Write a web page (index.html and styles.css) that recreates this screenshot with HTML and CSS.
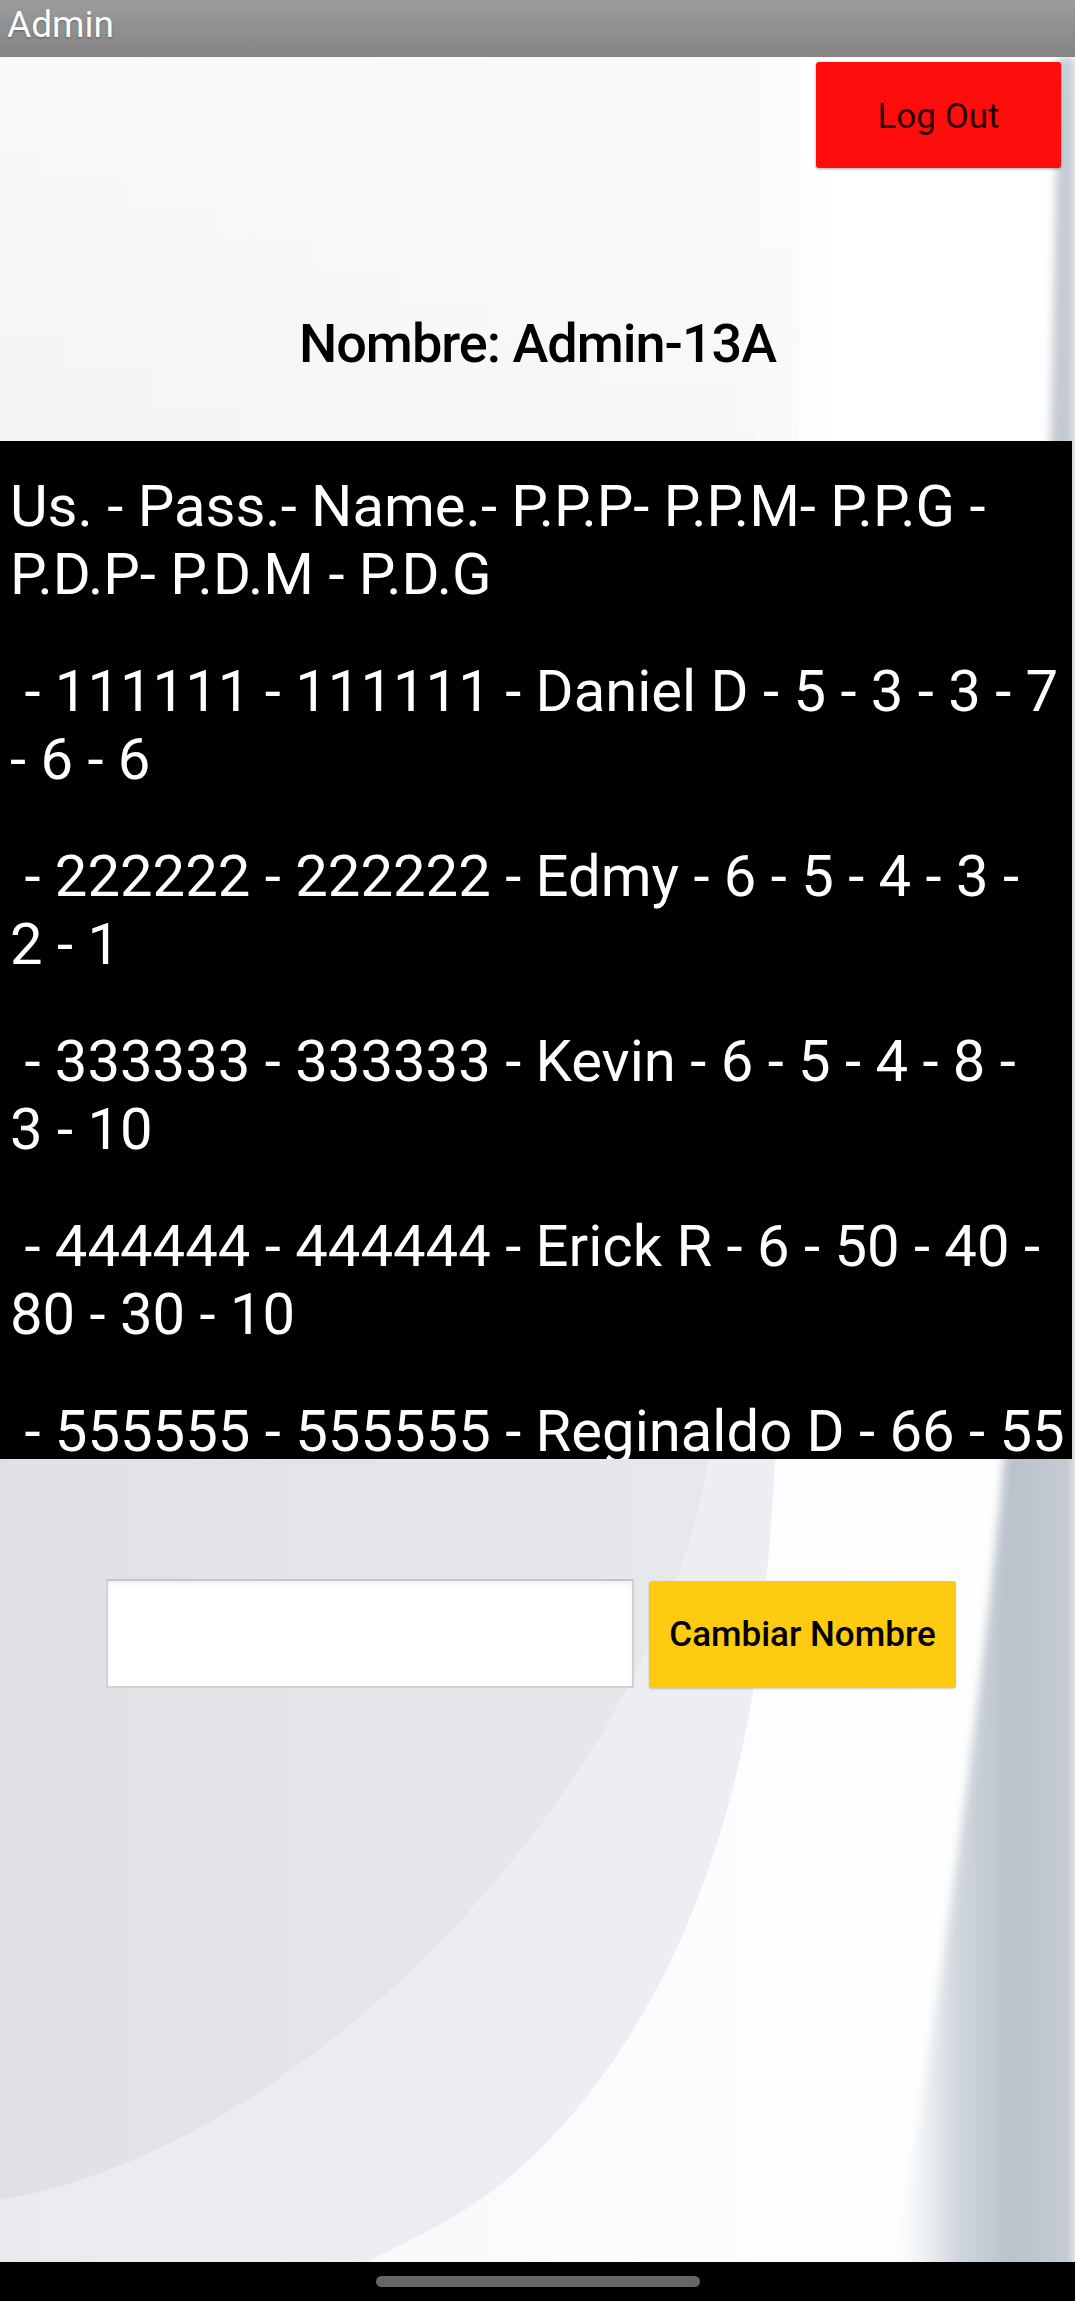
FILE: index.html
```html
<!DOCTYPE html>
<html lang="es">
<head>
<meta charset="utf-8">
<title>Admin</title>
<link rel="stylesheet" href="styles.css">
</head>
<body>
<div class="app">
  <svg class="wallpaper" viewBox="0 0 1075 2301" preserveAspectRatio="none" aria-hidden="true">
    <defs>
      <linearGradient id="wpBase" x1="0" y1="0" x2="1" y2="0">
        <stop offset="0" stop-color="#dfe1e4"/>
        <stop offset="0.5" stop-color="#e5e7ea"/>
        <stop offset="1" stop-color="#e9ebee"/>
      </linearGradient>
      <linearGradient id="wpMid" x1="0" y1="0" x2="1" y2="0">
        <stop offset="0" stop-color="#e9ebee"/>
        <stop offset="1" stop-color="#eef0f3"/>
      </linearGradient>
      <linearGradient id="wpBand" x1="0" y1="0" x2="1" y2="0">
        <stop offset="0" stop-color="#f7f8fa"/>
        <stop offset="0.6" stop-color="#fcfdfe"/>
        <stop offset="1" stop-color="#ffffff"/>
      </linearGradient>
      <linearGradient id="wpTop" x1="0" y1="0" x2="0" y2="1">
        <stop offset="0" stop-color="#ffffff" stop-opacity="0.8"/>
        <stop offset="0.4" stop-color="#ffffff" stop-opacity="0.65"/>
        <stop offset="1" stop-color="#ffffff" stop-opacity="0"/>
      </linearGradient>
      <linearGradient id="wpEdge" x1="0" y1="0" x2="1" y2="0">
        <stop offset="0" stop-color="#eef1f4" stop-opacity="0"/>
        <stop offset="0.35" stop-color="#d2d8de"/>
        <stop offset="0.65" stop-color="#b9c2cc"/>
        <stop offset="1" stop-color="#c6ccd3"/>
      </linearGradient>
      <filter id="soft"><feGaussianBlur stdDeviation="5"/></filter>
    </defs>
    <rect width="1075" height="2301" fill="url(#wpBase)"/>
    <path d="M760 57 C 755 700, 745 1250, 705 1480 C 640 1800, 300 2150, 0 2200 L0 2301 L1075 2301 L1075 57 Z" fill="url(#wpMid)"/>
    <path d="M800 57 C 800 800, 790 1400, 760 1640 C 730 1900, 620 2100, 480 2200 C 420 2240, 360 2262, 290 2301 L1075 2301 L1075 57 Z" fill="url(#wpBand)"/>
    <rect x="0" y="0" width="1075" height="1150" fill="url(#wpTop)"/>
    <path d="M1058 57 C 1050 600, 1030 1200, 1000 1500 C 970 1800, 930 2050, 890 2301 L1075 2301 L1075 57 Z" fill="url(#wpEdge)" filter="url(#soft)"/>
  </svg>

  <header class="appbar">
    <span class="appbar-title">Admin</span>
  </header>

  <main class="content">
    <div class="top-row">
      <button class="logout" type="button">Log Out</button>
    </div>

    <h1 class="name">Nombre: Admin-13A</h1>

    <section class="list">
      <p>Us. - Pass.- Name.- P.P.P- P.P.M- P.P.G -<br>P.D.P- P.D.M - P.D.G</p>
      <p> - 111111 - 111111 - Daniel D - 5 - 3 - 3 - 7<br>- 6 - 6</p>
      <p> - 222222 - 222222 - Edmy - 6 - 5 - 4 - 3 -<br>2 - 1</p>
      <p> - 333333 - 333333 - Kevin - 6 - 5 - 4 - 8 -<br>3 - 10</p>
      <p> - 444444 - 444444 - Erick R - 6 - 50 - 40 -<br>80 - 30 - 10</p>
      <p> - 555555 - 555555 - Reginaldo D - 66 - 55</p>
    </section>

    <div class="form-row">
      <input class="name-input" type="text" aria-label="Nuevo nombre">
      <button class="change" type="button">Cambiar Nombre</button>
    </div>
  </main>

  <footer class="navbar">
    <span class="pill"></span>
  </footer>
</div>
</body>
</html>
```

FILE: styles.css
```css
html, body {
  margin: 0;
  padding: 0;
}

body {
  width: 1075px;
  height: 2301px;
  overflow: hidden;
  background: #e6e8eb;
  font-family: Roboto, "Noto Sans", "Liberation Sans", sans-serif;
}

.app {
  position: relative;
  width: 1075px;
  height: 2301px;
  display: flex;
  flex-direction: column;
}

.wallpaper {
  position: absolute;
  top: 0;
  left: 0;
  width: 1075px;
  height: 2301px;
  z-index: 0;
}

.appbar,
.content,
.navbar {
  position: relative;
  z-index: 1;
}

.appbar {
  height: 57px;
  flex: none;
  display: flex;
  align-items: flex-start;
  padding-left: 7px;
  box-sizing: border-box;
  background: linear-gradient(#9c9c9c, #848484);
}

.appbar-title {
  color: #ffffff;
  font-size: 37px;
  line-height: 49px;
  text-shadow: 0 1px 2px rgba(0, 0, 0, 0.35);
}

.content {
  flex: 1;
  display: flex;
  flex-direction: column;
}

.top-row {
  display: flex;
  justify-content: flex-end;
  padding: 5px 14px 0 0;
}

.logout {
  width: 245px;
  height: 106px;
  margin: 0;
  padding: 3px 0 0;
  border: 0;
  border-radius: 3px;
  background: #ff0c0c;
  box-shadow: 0 1px 3px rgba(0, 0, 0, 0.35);
  color: rgba(0, 0, 0, 0.85);
  font-family: Roboto, "Noto Sans", sans-serif;
  font-weight: 400;
  font-size: 35px;
  line-height: 1;
}

.name {
  margin: 144px 0 0;
  text-align: center;
  font-family: Roboto, "Noto Sans", sans-serif;
  font-weight: 500;
  font-size: 54px;
  line-height: 64px;
  letter-spacing: -1px;
  color: #000000;
}

.list {
  margin: 65px 3px 0 0;
  height: 1018px;
  box-sizing: border-box;
  padding: 32px 0 0 10px;
  overflow: hidden;
  background: #000000;
  color: #ffffff;
  font-family: Roboto, "Noto Sans", sans-serif;
  font-weight: 400;
  font-size: 58px;
  line-height: 67.5px;
}

.list p {
  margin: 0 0 50px;
  white-space: pre;
}

.form-row {
  display: flex;
  justify-content: center;
  align-items: flex-start;
  gap: 15px;
  margin-top: 120px;
  padding-right: 13px;
}

.name-input {
  width: 528px;
  height: 109px;
  box-sizing: border-box;
  margin: 0;
  padding: 0 12px;
  border: 2px solid #cfd2d5;
  border-top-color: #c3c6c9;
  border-radius: 0;
  background: #ffffff;
  box-shadow: inset 0 4px 6px rgba(0, 0, 0, 0.05);
  font-family: Roboto, sans-serif;
  font-size: 35px;
}

.change {
  width: 307px;
  height: 107px;
  margin: 2px 0 0;
  padding: 0;
  border: 0;
  border-radius: 3px;
  background: #fecb10;
  box-shadow: 0 1px 2px rgba(0, 0, 0, 0.2);
  color: #000000;
  font-family: Roboto, "Noto Sans", sans-serif;
  font-weight: 500;
  font-size: 35px;
  line-height: 1;
}

.navbar {
  height: 39px;
  flex: none;
  display: flex;
  justify-content: center;
  align-items: flex-start;
  padding-top: 14px;
  box-sizing: border-box;
  background: #000000;
}

.pill {
  width: 324px;
  height: 11px;
  border-radius: 6px;
  background: #666666;
}
```
